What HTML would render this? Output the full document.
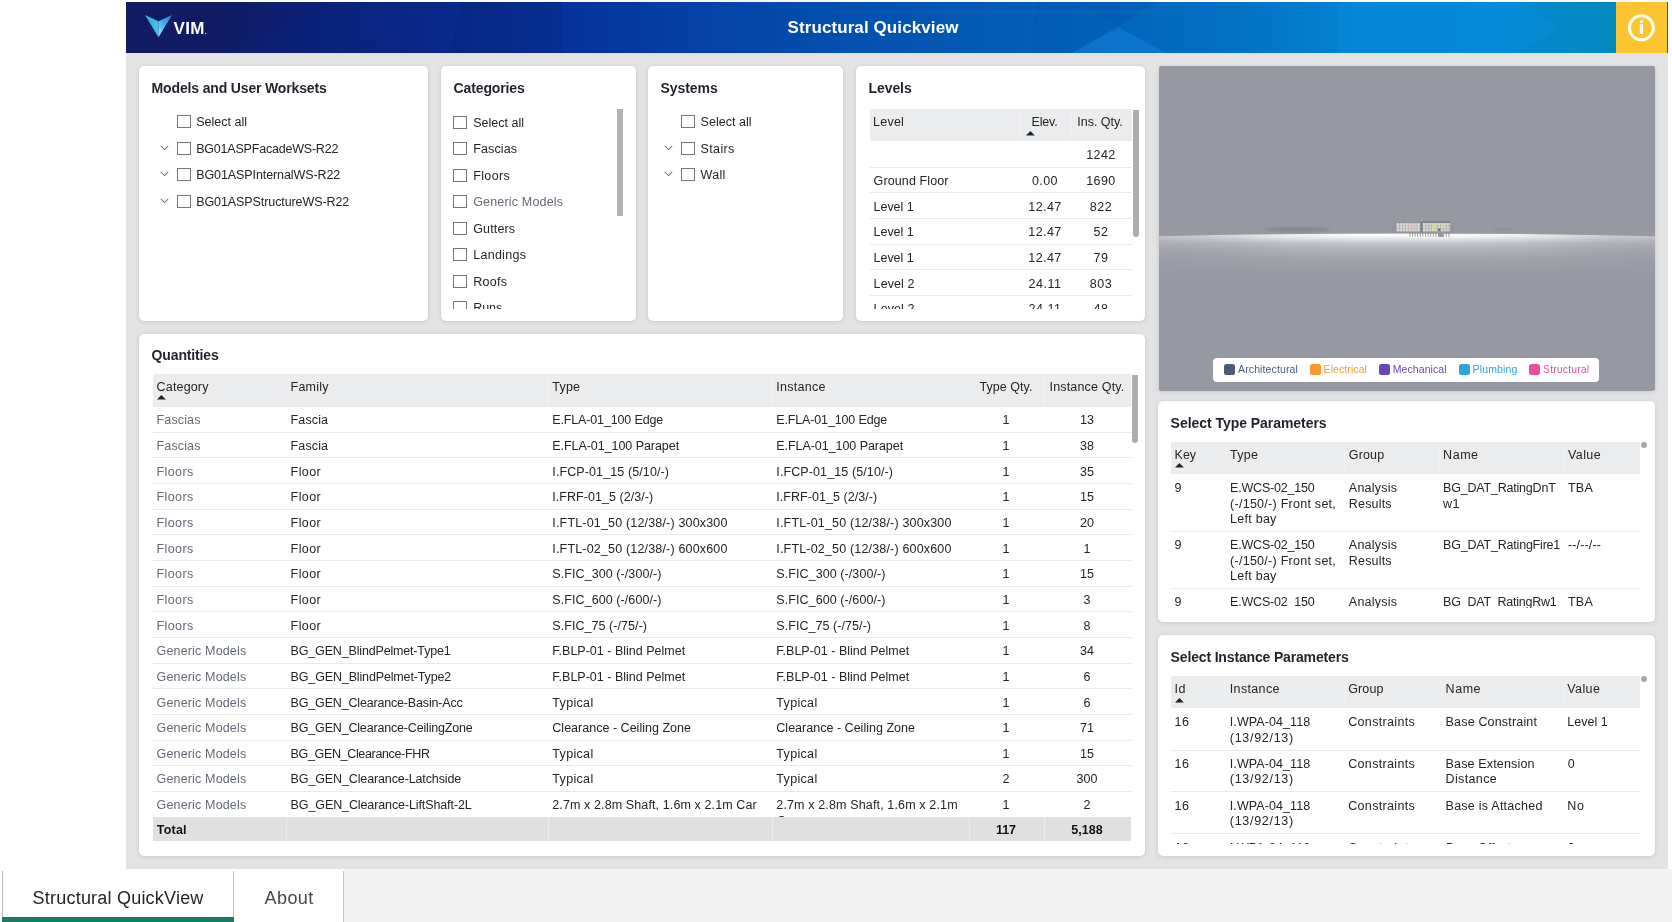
<!DOCTYPE html>
<html>
<head>
<meta charset="utf-8">
<title>Structural Quickview</title>
<style>
*{box-sizing:border-box;margin:0;padding:0}
html,body{width:1672px;height:922px;overflow:hidden;background:#fff;font-family:"Liberation Sans",sans-serif;font-size:12.5px;color:#252423}
.t{position:absolute;white-space:nowrap}
.card{background:#fff;border-radius:5px;box-shadow:0 1px 5px rgba(0,0,0,.11),0 0 2px rgba(0,0,0,.06)}
.clip{overflow:hidden}
</style>
</head>
<body>
<div id="root" style="position:absolute;left:0;top:0;width:1672px;height:922px;overflow:hidden;will-change:transform">
<div style="position:absolute;left:126.00px;top:53.00px;width:1542.00px;height:816.00px;background:#e3e3e5"></div>
<div class="" style="position:absolute;left:126.00px;top:2.00px;width:1542.00px;height:51.00px;overflow:hidden;background:linear-gradient(90deg,#101b62 0%,#0f1c66 6.1%,#0b2278 13.7%,#09278a 20.2%,#06329b 28.5%,#0440a5 36.5%,#034aab 42.4%,#0258b2 53.4%,#0262ba 61.9%,#0270c4 71.6%,#0282d0 78.7%,#0288d6 89.1%,#0289c8 93%,#0289c0 96.6%,#0289c0 100%)">
<svg style="position:absolute;left:0;top:0" width="1542" height="51" viewBox="126 2 1542 51">
<defs><linearGradient id="vl" x1="0" y1="0" x2="1" y2="1"><stop offset="0" stop-color="#3aa6e0"/><stop offset="1" stop-color="#49c6ea"/></linearGradient>
<linearGradient id="vr" x1="1" y1="0" x2="0.2" y2="1"><stop offset="0" stop-color="#2a80cc"/><stop offset=".5" stop-color="#3fa8e2"/><stop offset="1" stop-color="#8fe6f4"/></linearGradient></defs>
<polygon points="462,2 562,2 562,53 450,53" fill="#002060" opacity=".16"/>
<polygon points="230,53 330,2 440,2 340,53" fill="#1030a0" opacity=".10"/>
<polygon points="1072,53 1118,27 1166,53" fill="#1e90ea" opacity=".34"/>
<polygon points="1080,2 1118,27 1156,2" fill="#003c96" opacity=".14"/>
<polygon points="1036,2 1080,2 1118,27 1072,53 1030,53" fill="#003c96" opacity=".07"/>
<polygon points="1338,2 1520,2 1560,27 1520,53 1338,53" fill="#18a0f4" opacity=".13"/>
<polygon points="145,15 158.5,21.3 158.5,37.2" fill="url(#vl)"/>
<polygon points="172,15 158.5,21.3 158.5,37.2" fill="url(#vr)"/>
<rect x="1616" y="2" width="51" height="51" fill="#fdc432"/>
<rect x="1667" y="2" width="1" height="51" fill="#2f6a4a"/>
<circle cx="1641.4" cy="27.8" r="12" fill="none" stroke="#fffdf2" stroke-width="3"/>
<rect x="1639.8" y="24.2" width="3.3" height="9.8" fill="#fffdf2"/>
<rect x="1639.8" y="20.4" width="3.3" height="2.6" fill="#fffdf2"/>
</svg>
<div class="t" style="top:16.61px;font-size:17px;line-height:19px;font-weight:700;color:#fff;letter-spacing:0.255px;left:47.60px;">VIM</div>
<div style="position:absolute;left:79.00px;top:31.00px;width:1.20px;height:1.20px;background:#cfd6ee"></div>
<div class="t" style="top:16.11px;font-size:17px;line-height:19px;font-weight:700;color:#fff;letter-spacing:0.094px;left:661.50px;">Structural Quickview</div>
</div>
<div class="card" style="position:absolute;left:139.00px;top:66.00px;width:289.00px;height:255.00px;">
<div class="t" style="top:14.15px;font-size:14px;line-height:16px;font-weight:700;color:#1f232b;letter-spacing:-0.154px;left:12.60px;">Models and User Worksets</div>
<div style="position:absolute;left:38.00px;top:49.00px;width:13.60px;height:13.00px;border:1px solid #757575;background:#fff"></div>
<div class="t" style="top:48.67px;font-size:12.5px;line-height:14px;letter-spacing:0.027px;left:57.20px;">Select all</div>
<div style="position:absolute;left:38.00px;top:76.00px;width:13.60px;height:13.00px;border:1px solid #757575;background:#fff"></div>
<div class="t" style="top:75.67px;font-size:12.5px;line-height:14px;letter-spacing:-0.206px;left:57.20px;">BG01ASPFacadeWS-R22</div>
<svg style="position:absolute;left:21.30px;top:79.00px" width="9" height="6" viewBox="0 0 9 6"><path d="M0.8 0.8 L4.5 4.6 L8.2 0.8" fill="none" stroke="#787878" stroke-width="1.05"/></svg>
<div style="position:absolute;left:38.00px;top:102.00px;width:13.60px;height:13.00px;border:1px solid #757575;background:#fff"></div>
<div class="t" style="top:101.67px;font-size:12.5px;line-height:14px;letter-spacing:-0.091px;left:57.20px;">BG01ASPInternalWS-R22</div>
<svg style="position:absolute;left:21.30px;top:105.00px" width="9" height="6" viewBox="0 0 9 6"><path d="M0.8 0.8 L4.5 4.6 L8.2 0.8" fill="none" stroke="#787878" stroke-width="1.05"/></svg>
<div style="position:absolute;left:38.00px;top:129.00px;width:13.60px;height:13.00px;border:1px solid #757575;background:#fff"></div>
<div class="t" style="top:128.67px;font-size:12.5px;line-height:14px;letter-spacing:-0.087px;left:57.20px;">BG01ASPStructureWS-R22</div>
<svg style="position:absolute;left:21.30px;top:132.00px" width="9" height="6" viewBox="0 0 9 6"><path d="M0.8 0.8 L4.5 4.6 L8.2 0.8" fill="none" stroke="#787878" stroke-width="1.05"/></svg>
</div>
<div class="card" style="position:absolute;left:441.00px;top:66.00px;width:195.00px;height:255.00px;">
<div class="t" style="top:14.15px;font-size:14px;line-height:16px;font-weight:700;color:#1f232b;letter-spacing:-0.136px;left:12.60px;">Categories</div>
<div class="clip" style="position:absolute;left:0.00px;top:34.00px;width:195.00px;height:208.50px;">
<div style="position:absolute;left:12.00px;top:16.00px;width:13.60px;height:13.00px;border:1px solid #757575;background:#fff"></div>
<div class="t" style="top:15.67px;font-size:12.5px;line-height:14px;letter-spacing:0.027px;left:32.20px;">Select all</div>
<div style="position:absolute;left:12.00px;top:42.00px;width:13.60px;height:13.00px;border:1px solid #757575;background:#fff"></div>
<div class="t" style="top:41.67px;font-size:12.5px;line-height:14px;letter-spacing:0.132px;left:32.20px;">Fascias</div>
<div style="position:absolute;left:12.00px;top:69.00px;width:13.60px;height:13.00px;border:1px solid #757575;background:#fff"></div>
<div class="t" style="top:68.67px;font-size:12.5px;line-height:14px;letter-spacing:0.378px;left:32.20px;">Floors</div>
<div style="position:absolute;left:12.00px;top:95.00px;width:13.60px;height:13.00px;border:1px solid #757575;background:#fff"></div>
<div class="t" style="top:94.67px;font-size:12.5px;line-height:14px;color:#636a75;letter-spacing:0.175px;left:32.20px;">Generic Models</div>
<div style="position:absolute;left:12.00px;top:122.00px;width:13.60px;height:13.00px;border:1px solid #757575;background:#fff"></div>
<div class="t" style="top:121.67px;font-size:12.5px;line-height:14px;letter-spacing:0.143px;left:32.20px;">Gutters</div>
<div style="position:absolute;left:12.00px;top:148.00px;width:13.60px;height:13.00px;border:1px solid #757575;background:#fff"></div>
<div class="t" style="top:147.67px;font-size:12.5px;line-height:14px;letter-spacing:0.281px;left:32.20px;">Landings</div>
<div style="position:absolute;left:12.00px;top:175.00px;width:13.60px;height:13.00px;border:1px solid #757575;background:#fff"></div>
<div class="t" style="top:174.67px;font-size:12.5px;line-height:14px;letter-spacing:0.269px;left:32.20px;">Roofs</div>
<div style="position:absolute;left:12.00px;top:201.00px;width:13.60px;height:13.00px;border:1px solid #757575;background:#fff"></div>
<div class="t" style="top:200.67px;font-size:12.5px;line-height:14px;letter-spacing:-0.047px;left:32.20px;">Runs</div>
</div>
<div style="position:absolute;left:176.00px;top:43.00px;width:6.00px;height:106.50px;background:#b3b3b3"></div>
</div>
<div class="card" style="position:absolute;left:648.00px;top:66.00px;width:195.00px;height:255.00px;">
<div class="t" style="top:14.15px;font-size:14px;line-height:16px;font-weight:700;color:#1f232b;letter-spacing:-0.085px;left:12.60px;">Systems</div>
<div style="position:absolute;left:33.00px;top:49.00px;width:13.60px;height:13.00px;border:1px solid #757575;background:#fff"></div>
<div class="t" style="top:48.67px;font-size:12.5px;line-height:14px;letter-spacing:0.027px;left:52.60px;">Select all</div>
<div style="position:absolute;left:33.00px;top:76.00px;width:13.60px;height:13.00px;border:1px solid #757575;background:#fff"></div>
<div class="t" style="top:75.67px;font-size:12.5px;line-height:14px;letter-spacing:0.341px;left:52.60px;">Stairs</div>
<svg style="position:absolute;left:16.30px;top:79.00px" width="9" height="6" viewBox="0 0 9 6"><path d="M0.8 0.8 L4.5 4.6 L8.2 0.8" fill="none" stroke="#787878" stroke-width="1.05"/></svg>
<div style="position:absolute;left:33.00px;top:102.00px;width:13.60px;height:13.00px;border:1px solid #757575;background:#fff"></div>
<div class="t" style="top:101.67px;font-size:12.5px;line-height:14px;letter-spacing:0.289px;left:52.60px;">Wall</div>
<svg style="position:absolute;left:16.30px;top:105.00px" width="9" height="6" viewBox="0 0 9 6"><path d="M0.8 0.8 L4.5 4.6 L8.2 0.8" fill="none" stroke="#787878" stroke-width="1.05"/></svg>
</div>
<div class="card" style="position:absolute;left:856.00px;top:66.00px;width:289.00px;height:255.00px;">
<div class="t" style="top:14.15px;font-size:14px;line-height:16px;font-weight:700;color:#1f232b;letter-spacing:-0.099px;left:12.60px;">Levels</div>
<div style="position:absolute;left:14.00px;top:43.40px;width:262.00px;height:32.00px;background:#ebecee"></div>
<div class="t" style="top:48.67px;font-size:12.5px;line-height:14px;letter-spacing:0.222px;left:17.10px;">Level</div>
<div class="t" style="top:48.67px;font-size:12.5px;line-height:14px;letter-spacing:-0.175px;left:175.50px;">Elev.</div>
<div class="t" style="top:48.67px;font-size:12.5px;line-height:14px;letter-spacing:-0.014px;left:221.25px;">Ins. Qty.</div>
<svg style="position:absolute;left:169.60px;top:64.60px" width="9" height="5" viewBox="0 0 9 5"><path d="M0 4.6 L4.4 0 L8.8 4.6 Z" fill="#1f232b"/></svg>
<div style="position:absolute;left:164.00px;top:43.40px;width:1.00px;height:32.00px;background:rgba(255,255,255,.24)"></div>
<div style="position:absolute;left:215.00px;top:43.40px;width:1.00px;height:32.00px;background:rgba(255,255,255,.24)"></div>
<div style="position:absolute;left:277.00px;top:43.50px;width:5.60px;height:127.50px;background:#adadad;border-radius:0 0 3px 3px"></div>
<div class="clip" style="position:absolute;left:14.00px;top:75.40px;width:262.00px;height:167.20px;">
<div class="t" style="top:6.77px;font-size:12.5px;line-height:14px;letter-spacing:0.422px;left:216.25px;">1242</div>
<div style="position:absolute;left:0.00px;top:25.60px;width:262.00px;height:1.00px;background:#e8e8e8"></div>
<div class="t" style="top:32.47px;font-size:12.5px;line-height:14px;letter-spacing:0.112px;left:3.60px;">Ground Floor</div>
<div class="t" style="top:32.47px;font-size:12.5px;line-height:14px;letter-spacing:0.414px;left:162.00px;">0.00</div>
<div class="t" style="top:32.47px;font-size:12.5px;line-height:14px;letter-spacing:0.422px;left:216.25px;">1690</div>
<div style="position:absolute;left:0.00px;top:50.60px;width:262.00px;height:1.00px;background:#e8e8e8"></div>
<div class="t" style="top:58.17px;font-size:12.5px;line-height:14px;letter-spacing:-0.045px;left:3.60px;">Level 1</div>
<div class="t" style="top:58.17px;font-size:12.5px;line-height:14px;letter-spacing:0.444px;left:158.25px;">12.47</div>
<div class="t" style="top:58.17px;font-size:12.5px;line-height:14px;letter-spacing:0.547px;left:219.75px;">822</div>
<div style="position:absolute;left:0.00px;top:76.60px;width:262.00px;height:1.00px;background:#e8e8e8"></div>
<div class="t" style="top:83.87px;font-size:12.5px;line-height:14px;letter-spacing:-0.045px;left:3.60px;">Level 1</div>
<div class="t" style="top:83.87px;font-size:12.5px;line-height:14px;letter-spacing:0.444px;left:158.25px;">12.47</div>
<div class="t" style="top:83.87px;font-size:12.5px;line-height:14px;letter-spacing:0.547px;left:223.50px;">52</div>
<div style="position:absolute;left:0.00px;top:102.60px;width:262.00px;height:1.00px;background:#e8e8e8"></div>
<div class="t" style="top:109.57px;font-size:12.5px;line-height:14px;letter-spacing:-0.045px;left:3.60px;">Level 1</div>
<div class="t" style="top:109.57px;font-size:12.5px;line-height:14px;letter-spacing:0.444px;left:158.25px;">12.47</div>
<div class="t" style="top:109.57px;font-size:12.5px;line-height:14px;letter-spacing:0.547px;left:223.50px;">79</div>
<div style="position:absolute;left:0.00px;top:127.60px;width:262.00px;height:1.00px;background:#e8e8e8"></div>
<div class="t" style="top:135.27px;font-size:12.5px;line-height:14px;letter-spacing:0.098px;left:3.60px;">Level 2</div>
<div class="t" style="top:135.27px;font-size:12.5px;line-height:14px;letter-spacing:0.528px;left:158.50px;">24.11</div>
<div class="t" style="top:135.27px;font-size:12.5px;line-height:14px;letter-spacing:0.547px;left:219.75px;">803</div>
<div style="position:absolute;left:0.00px;top:153.60px;width:262.00px;height:1.00px;background:#e8e8e8"></div>
<div class="t" style="top:160.97px;font-size:12.5px;line-height:14px;letter-spacing:0.098px;left:3.60px;">Level 2</div>
<div class="t" style="top:160.97px;font-size:12.5px;line-height:14px;letter-spacing:0.528px;left:158.50px;">24.11</div>
<div class="t" style="top:160.97px;font-size:12.5px;line-height:14px;letter-spacing:0.547px;left:223.50px;">48</div>
<div style="position:absolute;left:0.00px;top:179.60px;width:262.00px;height:1.00px;background:#e8e8e8"></div>
</div>
</div>
<div class="card" style="position:absolute;left:1159.00px;top:66.00px;width:496.00px;height:325.00px;background:#9699a2;overflow:hidden;border-radius:3px">
<svg style="position:absolute;left:0;top:0" width="496" height="325" viewBox="1159 66 496 325">
<defs>
<linearGradient id="hz" gradientUnits="userSpaceOnUse" x1="0" y1="233.3" x2="0" y2="283.3">
<stop offset="0" stop-color="#fff" stop-opacity=".85"/><stop offset=".03" stop-color="#fff" stop-opacity=".97"/>
<stop offset=".08" stop-color="#fff" stop-opacity=".86"/><stop offset=".14" stop-color="#fff" stop-opacity=".62"/>
<stop offset=".20" stop-color="#fff" stop-opacity=".44"/><stop offset=".28" stop-color="#fff" stop-opacity=".31"/>
<stop offset=".40" stop-color="#fff" stop-opacity=".19"/><stop offset=".56" stop-color="#fff" stop-opacity=".10"/>
<stop offset=".76" stop-color="#fff" stop-opacity=".04"/><stop offset="1" stop-color="#fff" stop-opacity="0"/></linearGradient>
<linearGradient id="hm" x1="0" y1="0" x2="1" y2="0">
<stop offset="0" stop-color="#fff" stop-opacity=".46"/><stop offset=".12" stop-color="#fff" stop-opacity=".60"/>
<stop offset=".27" stop-color="#fff" stop-opacity=".90"/><stop offset=".40" stop-color="#fff" stop-opacity="1"/>
<stop offset=".60" stop-color="#fff" stop-opacity="1"/><stop offset=".73" stop-color="#fff" stop-opacity=".90"/>
<stop offset=".88" stop-color="#fff" stop-opacity=".60"/><stop offset="1" stop-color="#fff" stop-opacity=".46"/></linearGradient>
<mask id="mk" maskUnits="userSpaceOnUse" x="1158" y="66" width="497" height="325"><rect x="1158" y="66" width="497" height="325" fill="url(#hm)"/></mask>
<filter id="bl" x="-20%" y="-200%" width="140%" height="500%"><feGaussianBlur stdDeviation="1.2"/></filter>
<filter id="b2" x="-20%" y="-50%" width="140%" height="200%"><feGaussianBlur stdDeviation="0.45"/></filter>
</defs>
<rect x="1158" y="66" width="497" height="325" fill="#9699a2"/>
<ellipse cx="1297" cy="229.3" rx="33" ry="2.6" fill="#82858e" opacity=".85" filter="url(#bl)"/>
<ellipse cx="1503" cy="229.5" rx="10" ry="1.6" fill="#878a93" opacity=".6" filter="url(#bl)"/>
<g mask="url(#mk)"><path d="M1158 236.2 Q1406.5 230.6 1655 236.2 L1655 300 L1158 300 Z" fill="url(#hz)"/></g>
<g filter="url(#b2)"><rect x="1392" y="226" width="62" height="6.5" fill="#8d9099" opacity=".55"/><rect x="1396.7" y="223" width="23.1" height="8.3" fill="#dedcd8"/><rect x="1423" y="223" width="27.2" height="8.3" fill="#d9d9d2"/><rect x="1399.3" y="223" width="0.7" height="8.3" fill="#9a9a9c" opacity=".8"/><rect x="1402.2" y="223" width="0.7" height="8.3" fill="#9a9a9c" opacity=".8"/><rect x="1405.1" y="223" width="0.7" height="8.3" fill="#9a9a9c" opacity=".8"/><rect x="1408.0" y="223" width="0.7" height="8.3" fill="#9a9a9c" opacity=".8"/><rect x="1410.9" y="223" width="0.7" height="8.3" fill="#9a9a9c" opacity=".8"/><rect x="1413.8" y="223" width="0.7" height="8.3" fill="#9a9a9c" opacity=".8"/><rect x="1416.7" y="223" width="0.7" height="8.3" fill="#9a9a9c" opacity=".8"/><rect x="1425.6" y="223" width="0.7" height="8.3" fill="#9a9a9c" opacity=".8"/><rect x="1428.5" y="223" width="0.7" height="8.3" fill="#9a9a9c" opacity=".8"/><rect x="1431.4" y="223" width="0.7" height="8.3" fill="#9a9a9c" opacity=".8"/><rect x="1434.3" y="223" width="0.7" height="8.3" fill="#9a9a9c" opacity=".8"/><rect x="1437.2" y="223" width="0.7" height="8.3" fill="#9a9a9c" opacity=".8"/><rect x="1440.1" y="223" width="0.7" height="8.3" fill="#9a9a9c" opacity=".8"/><rect x="1443.0" y="223" width="0.7" height="8.3" fill="#9a9a9c" opacity=".8"/><rect x="1445.9" y="223" width="0.7" height="8.3" fill="#9a9a9c" opacity=".8"/><rect x="1448.8" y="223" width="0.7" height="8.3" fill="#9a9a9c" opacity=".8"/><rect x="1396.7" y="225.6" width="23.1" height="0.7" fill="#a9a5a5" opacity=".8"/><rect x="1423" y="225.6" width="27.2" height="0.7" fill="#a3a59d" opacity=".8"/><rect x="1396.7" y="228.4" width="23.1" height="0.7" fill="#a9a5a5" opacity=".8"/><rect x="1423" y="228.4" width="27.2" height="0.7" fill="#a3a59d" opacity=".8"/><rect x="1407" y="224" width="11" height="6" fill="#e6c9c9" opacity=".35"/><rect x="1432" y="223.6" width="3.4" height="7.4" fill="#d6dc94" opacity=".75"/><rect x="1442" y="223.6" width="2.3" height="5" fill="#d3d994" opacity=".75"/><rect x="1438" y="228.6" width="2.4" height="2.6" fill="#6d6f72"/><rect x="1420.4" y="221.6" width="30.2" height="1.1" fill="#74777c"/><rect x="1396" y="222.4" width="24" height="0.7" fill="#8a8c92"/><rect x="1420.6" y="221" width="1.6" height="11.5" fill="#7c7f86"/><rect x="1421" y="219.6" width="1" height="1.2" fill="#c9cad0"/><rect x="1409.5" y="232.6" width="0.8" height="4.2" fill="#7d7f85" opacity=".9"/><rect x="1412.1" y="232.6" width="0.8" height="4.2" fill="#7d7f85" opacity=".9"/><rect x="1414.7" y="232.6" width="0.8" height="4.2" fill="#7d7f85" opacity=".9"/><rect x="1417.3" y="232.6" width="0.8" height="4.2" fill="#7d7f85" opacity=".9"/><rect x="1419.9" y="232.6" width="0.8" height="4.2" fill="#7d7f85" opacity=".9"/><rect x="1422.5" y="232.6" width="0.8" height="4.2" fill="#7d7f85" opacity=".9"/><rect x="1425.1" y="232.6" width="0.8" height="4.2" fill="#7d7f85" opacity=".9"/><rect x="1427.7" y="232.6" width="0.8" height="4.2" fill="#7d7f85" opacity=".9"/><rect x="1430.3" y="232.6" width="0.8" height="4.2" fill="#7d7f85" opacity=".9"/><rect x="1432.9" y="232.6" width="0.8" height="4.2" fill="#7d7f85" opacity=".9"/><rect x="1435.5" y="232.6" width="0.8" height="4.2" fill="#7d7f85" opacity=".9"/><rect x="1438.1" y="232.6" width="0.8" height="4.2" fill="#7d7f85" opacity=".9"/><rect x="1440.7" y="232.6" width="0.8" height="4.2" fill="#7d7f85" opacity=".9"/><rect x="1443.3" y="232.6" width="0.8" height="4.2" fill="#7d7f85" opacity=".9"/><rect x="1445.9" y="232.6" width="0.8" height="4.2" fill="#7d7f85" opacity=".9"/><rect x="1448.5" y="232.6" width="0.8" height="4.2" fill="#7d7f85" opacity=".9"/><rect x="1439" y="233.4" width="4" height="3.5" fill="#8b8d93" opacity=".9"/></g>
</svg>
<div style="position:absolute;left:54.00px;top:291.50px;width:385.50px;height:24.00px;background:#fff;border-radius:4px"></div>
<div style="position:absolute;left:65.00px;top:297.50px;width:11.00px;height:11.00px;background:#4a5a78;border-radius:2.5px"></div>
<div class="t" style="top:296.96px;font-size:10.5px;line-height:12px;color:#4a5a78;letter-spacing:0.126px;left:79.00px;">Architectural</div>
<div style="position:absolute;left:150.50px;top:297.50px;width:11.00px;height:11.00px;background:#f89a2a;border-radius:2.5px"></div>
<div class="t" style="top:296.96px;font-size:10.5px;line-height:12px;color:#f89a2a;letter-spacing:0.079px;left:164.60px;">Electrical</div>
<div style="position:absolute;left:219.50px;top:297.50px;width:11.00px;height:11.00px;background:#6b45b5;border-radius:2.5px"></div>
<div class="t" style="top:296.96px;font-size:10.5px;line-height:12px;color:#6b45b5;letter-spacing:0.067px;left:233.80px;">Mechanical</div>
<div style="position:absolute;left:299.50px;top:297.50px;width:11.00px;height:11.00px;background:#2ea3dc;border-radius:2.5px"></div>
<div class="t" style="top:296.96px;font-size:10.5px;line-height:12px;color:#2ea3dc;letter-spacing:0.127px;left:313.60px;">Plumbing</div>
<div style="position:absolute;left:370.00px;top:297.50px;width:11.00px;height:11.00px;background:#e94fa0;border-radius:2.5px"></div>
<div class="t" style="top:296.96px;font-size:10.5px;line-height:12px;color:#e94fa0;letter-spacing:0.136px;left:384.00px;">Structural</div>
</div>
<div class="card" style="position:absolute;left:139.00px;top:334.00px;width:1006.00px;height:522.00px;">
<div class="t" style="top:13.15px;font-size:14px;line-height:16px;font-weight:700;color:#1f232b;letter-spacing:-0.147px;left:12.60px;">Quantities</div>
<div style="position:absolute;left:14.00px;top:40.00px;width:978.00px;height:32.60px;background:#ebecee"></div>
<div class="t" style="top:45.87px;font-size:12.5px;line-height:14px;letter-spacing:0.158px;left:17.60px;">Category</div>
<div class="t" style="top:45.87px;font-size:12.5px;line-height:14px;letter-spacing:0.198px;left:151.60px;">Family</div>
<div class="t" style="top:45.87px;font-size:12.5px;line-height:14px;letter-spacing:0.223px;left:413.30px;">Type</div>
<div class="t" style="top:45.87px;font-size:12.5px;line-height:14px;letter-spacing:0.279px;left:637.30px;">Instance</div>
<div class="t" style="top:45.87px;font-size:12.5px;line-height:14px;letter-spacing:0.047px;left:840.50px;">Type Qty.</div>
<div class="t" style="top:45.87px;font-size:12.5px;line-height:14px;letter-spacing:0.175px;left:910.50px;">Instance Qty.</div>
<svg style="position:absolute;left:17.60px;top:61.40px" width="9" height="5" viewBox="0 0 9 5"><path d="M0 4.6 L4.4 0 L8.8 4.6 Z" fill="#1f232b"/></svg>
<div style="position:absolute;left:147.00px;top:40.00px;width:1.00px;height:32.60px;background:rgba(255,255,255,.24)"></div>
<div style="position:absolute;left:408.50px;top:40.00px;width:1.00px;height:32.60px;background:rgba(255,255,255,.24)"></div>
<div style="position:absolute;left:632.50px;top:40.00px;width:1.00px;height:32.60px;background:rgba(255,255,255,.24)"></div>
<div style="position:absolute;left:829.50px;top:40.00px;width:1.00px;height:32.60px;background:rgba(255,255,255,.24)"></div>
<div style="position:absolute;left:904.50px;top:40.00px;width:1.00px;height:32.60px;background:rgba(255,255,255,.24)"></div>
<div style="position:absolute;left:993.00px;top:41.00px;width:5.60px;height:68.00px;background:#adadad;border-radius:0 0 3px 3px"></div>
<div class="clip" style="position:absolute;left:14.00px;top:72.60px;width:978.00px;height:410.40px;">
<div class="t" style="top:6.77px;font-size:12.5px;line-height:14px;color:#636a75;letter-spacing:0.132px;left:3.60px;">Fascias</div>
<div class="t" style="top:6.77px;font-size:12.5px;line-height:14px;letter-spacing:0.112px;left:137.60px;">Fascia</div>
<div class="t" style="top:6.77px;font-size:12.5px;line-height:14px;letter-spacing:-0.146px;left:399.30px;">E.FLA-01_100 Edge</div>
<div class="t" style="top:6.77px;font-size:12.5px;line-height:14px;letter-spacing:-0.146px;left:623.30px;">E.FLA-01_100 Edge</div>
<div class="t" style="top:6.77px;font-size:12.5px;line-height:14px;left:849.52px;">1</div>
<div class="t" style="top:6.77px;font-size:12.5px;line-height:14px;left:927.05px;">13</div>
<div style="position:absolute;left:0.00px;top:25.40px;width:978.00px;height:1.00px;background:#e8e8e8"></div>
<div class="t" style="top:32.42px;font-size:12.5px;line-height:14px;color:#636a75;letter-spacing:0.132px;left:3.60px;">Fascias</div>
<div class="t" style="top:32.42px;font-size:12.5px;line-height:14px;letter-spacing:0.112px;left:137.60px;">Fascia</div>
<div class="t" style="top:32.42px;font-size:12.5px;line-height:14px;letter-spacing:-0.054px;left:399.30px;">E.FLA-01_100 Parapet</div>
<div class="t" style="top:32.42px;font-size:12.5px;line-height:14px;letter-spacing:-0.054px;left:623.30px;">E.FLA-01_100 Parapet</div>
<div class="t" style="top:32.42px;font-size:12.5px;line-height:14px;left:849.52px;">1</div>
<div class="t" style="top:32.42px;font-size:12.5px;line-height:14px;left:927.05px;">38</div>
<div style="position:absolute;left:0.00px;top:50.40px;width:978.00px;height:1.00px;background:#e8e8e8"></div>
<div class="t" style="top:58.07px;font-size:12.5px;line-height:14px;color:#636a75;letter-spacing:0.378px;left:3.60px;">Floors</div>
<div class="t" style="top:58.07px;font-size:12.5px;line-height:14px;letter-spacing:0.403px;left:137.60px;">Floor</div>
<div class="t" style="top:58.07px;font-size:12.5px;line-height:14px;letter-spacing:0.108px;left:399.30px;">I.FCP-01_15 (5/10/-)</div>
<div class="t" style="top:58.07px;font-size:12.5px;line-height:14px;letter-spacing:0.108px;left:623.30px;">I.FCP-01_15 (5/10/-)</div>
<div class="t" style="top:58.07px;font-size:12.5px;line-height:14px;left:849.52px;">1</div>
<div class="t" style="top:58.07px;font-size:12.5px;line-height:14px;left:927.05px;">35</div>
<div style="position:absolute;left:0.00px;top:76.40px;width:978.00px;height:1.00px;background:#e8e8e8"></div>
<div class="t" style="top:83.72px;font-size:12.5px;line-height:14px;color:#636a75;letter-spacing:0.378px;left:3.60px;">Floors</div>
<div class="t" style="top:83.72px;font-size:12.5px;line-height:14px;letter-spacing:0.403px;left:137.60px;">Floor</div>
<div class="t" style="top:83.72px;font-size:12.5px;line-height:14px;letter-spacing:0.054px;left:399.30px;">I.FRF-01_5 (2/3/-)</div>
<div class="t" style="top:83.72px;font-size:12.5px;line-height:14px;letter-spacing:0.054px;left:623.30px;">I.FRF-01_5 (2/3/-)</div>
<div class="t" style="top:83.72px;font-size:12.5px;line-height:14px;left:849.52px;">1</div>
<div class="t" style="top:83.72px;font-size:12.5px;line-height:14px;left:927.05px;">15</div>
<div style="position:absolute;left:0.00px;top:102.40px;width:978.00px;height:1.00px;background:#e8e8e8"></div>
<div class="t" style="top:109.37px;font-size:12.5px;line-height:14px;color:#636a75;letter-spacing:0.378px;left:3.60px;">Floors</div>
<div class="t" style="top:109.37px;font-size:12.5px;line-height:14px;letter-spacing:0.403px;left:137.60px;">Floor</div>
<div class="t" style="top:109.37px;font-size:12.5px;line-height:14px;letter-spacing:0.174px;left:399.30px;">I.FTL-01_50 (12/38/-) 300x300</div>
<div class="t" style="top:109.37px;font-size:12.5px;line-height:14px;letter-spacing:0.174px;left:623.30px;">I.FTL-01_50 (12/38/-) 300x300</div>
<div class="t" style="top:109.37px;font-size:12.5px;line-height:14px;left:849.52px;">1</div>
<div class="t" style="top:109.37px;font-size:12.5px;line-height:14px;left:927.05px;">20</div>
<div style="position:absolute;left:0.00px;top:127.40px;width:978.00px;height:1.00px;background:#e8e8e8"></div>
<div class="t" style="top:135.02px;font-size:12.5px;line-height:14px;color:#636a75;letter-spacing:0.378px;left:3.60px;">Floors</div>
<div class="t" style="top:135.02px;font-size:12.5px;line-height:14px;letter-spacing:0.403px;left:137.60px;">Floor</div>
<div class="t" style="top:135.02px;font-size:12.5px;line-height:14px;letter-spacing:0.174px;left:399.30px;">I.FTL-02_50 (12/38/-) 600x600</div>
<div class="t" style="top:135.02px;font-size:12.5px;line-height:14px;letter-spacing:0.174px;left:623.30px;">I.FTL-02_50 (12/38/-) 600x600</div>
<div class="t" style="top:135.02px;font-size:12.5px;line-height:14px;left:849.52px;">1</div>
<div class="t" style="top:135.02px;font-size:12.5px;line-height:14px;left:930.52px;">1</div>
<div style="position:absolute;left:0.00px;top:153.40px;width:978.00px;height:1.00px;background:#e8e8e8"></div>
<div class="t" style="top:160.67px;font-size:12.5px;line-height:14px;color:#636a75;letter-spacing:0.378px;left:3.60px;">Floors</div>
<div class="t" style="top:160.67px;font-size:12.5px;line-height:14px;letter-spacing:0.403px;left:137.60px;">Floor</div>
<div class="t" style="top:160.67px;font-size:12.5px;line-height:14px;letter-spacing:0.080px;left:399.30px;">S.FIC_300 (-/300/-)</div>
<div class="t" style="top:160.67px;font-size:12.5px;line-height:14px;letter-spacing:0.080px;left:623.30px;">S.FIC_300 (-/300/-)</div>
<div class="t" style="top:160.67px;font-size:12.5px;line-height:14px;left:849.52px;">1</div>
<div class="t" style="top:160.67px;font-size:12.5px;line-height:14px;left:927.05px;">15</div>
<div style="position:absolute;left:0.00px;top:179.40px;width:978.00px;height:1.00px;background:#e8e8e8"></div>
<div class="t" style="top:186.32px;font-size:12.5px;line-height:14px;color:#636a75;letter-spacing:0.378px;left:3.60px;">Floors</div>
<div class="t" style="top:186.32px;font-size:12.5px;line-height:14px;letter-spacing:0.403px;left:137.60px;">Floor</div>
<div class="t" style="top:186.32px;font-size:12.5px;line-height:14px;letter-spacing:0.080px;left:399.30px;">S.FIC_600 (-/600/-)</div>
<div class="t" style="top:186.32px;font-size:12.5px;line-height:14px;letter-spacing:0.080px;left:623.30px;">S.FIC_600 (-/600/-)</div>
<div class="t" style="top:186.32px;font-size:12.5px;line-height:14px;left:849.52px;">1</div>
<div class="t" style="top:186.32px;font-size:12.5px;line-height:14px;left:930.52px;">3</div>
<div style="position:absolute;left:0.00px;top:204.40px;width:978.00px;height:1.00px;background:#e8e8e8"></div>
<div class="t" style="top:211.97px;font-size:12.5px;line-height:14px;color:#636a75;letter-spacing:0.378px;left:3.60px;">Floors</div>
<div class="t" style="top:211.97px;font-size:12.5px;line-height:14px;letter-spacing:0.403px;left:137.60px;">Floor</div>
<div class="t" style="top:211.97px;font-size:12.5px;line-height:14px;letter-spacing:0.060px;left:399.30px;">S.FIC_75 (-/75/-)</div>
<div class="t" style="top:211.97px;font-size:12.5px;line-height:14px;letter-spacing:0.060px;left:623.30px;">S.FIC_75 (-/75/-)</div>
<div class="t" style="top:211.97px;font-size:12.5px;line-height:14px;left:849.52px;">1</div>
<div class="t" style="top:211.97px;font-size:12.5px;line-height:14px;left:930.52px;">8</div>
<div style="position:absolute;left:0.00px;top:230.40px;width:978.00px;height:1.00px;background:#e8e8e8"></div>
<div class="t" style="top:237.62px;font-size:12.5px;line-height:14px;color:#636a75;letter-spacing:0.154px;left:3.60px;">Generic Models</div>
<div class="t" style="top:237.62px;font-size:12.5px;line-height:14px;letter-spacing:-0.165px;left:137.60px;">BG_GEN_BlindPelmet-Type1</div>
<div class="t" style="top:237.62px;font-size:12.5px;line-height:14px;letter-spacing:0.009px;left:399.30px;">F.BLP-01 - Blind Pelmet</div>
<div class="t" style="top:237.62px;font-size:12.5px;line-height:14px;letter-spacing:0.009px;left:623.30px;">F.BLP-01 - Blind Pelmet</div>
<div class="t" style="top:237.62px;font-size:12.5px;line-height:14px;left:849.52px;">1</div>
<div class="t" style="top:237.62px;font-size:12.5px;line-height:14px;left:927.05px;">34</div>
<div style="position:absolute;left:0.00px;top:256.40px;width:978.00px;height:1.00px;background:#e8e8e8"></div>
<div class="t" style="top:263.27px;font-size:12.5px;line-height:14px;color:#636a75;letter-spacing:0.154px;left:3.60px;">Generic Models</div>
<div class="t" style="top:263.27px;font-size:12.5px;line-height:14px;letter-spacing:-0.145px;left:137.60px;">BG_GEN_BlindPelmet-Type2</div>
<div class="t" style="top:263.27px;font-size:12.5px;line-height:14px;letter-spacing:0.009px;left:399.30px;">F.BLP-01 - Blind Pelmet</div>
<div class="t" style="top:263.27px;font-size:12.5px;line-height:14px;letter-spacing:0.009px;left:623.30px;">F.BLP-01 - Blind Pelmet</div>
<div class="t" style="top:263.27px;font-size:12.5px;line-height:14px;left:849.52px;">1</div>
<div class="t" style="top:263.27px;font-size:12.5px;line-height:14px;left:930.52px;">6</div>
<div style="position:absolute;left:0.00px;top:281.40px;width:978.00px;height:1.00px;background:#e8e8e8"></div>
<div class="t" style="top:288.92px;font-size:12.5px;line-height:14px;color:#636a75;letter-spacing:0.154px;left:3.60px;">Generic Models</div>
<div class="t" style="top:288.92px;font-size:12.5px;line-height:14px;letter-spacing:-0.172px;left:137.60px;">BG_GEN_Clearance-Basin-Acc</div>
<div class="t" style="top:288.92px;font-size:12.5px;line-height:14px;letter-spacing:0.328px;left:399.30px;">Typical</div>
<div class="t" style="top:288.92px;font-size:12.5px;line-height:14px;letter-spacing:0.328px;left:623.30px;">Typical</div>
<div class="t" style="top:288.92px;font-size:12.5px;line-height:14px;left:849.52px;">1</div>
<div class="t" style="top:288.92px;font-size:12.5px;line-height:14px;left:930.52px;">6</div>
<div style="position:absolute;left:0.00px;top:307.40px;width:978.00px;height:1.00px;background:#e8e8e8"></div>
<div class="t" style="top:314.57px;font-size:12.5px;line-height:14px;color:#636a75;letter-spacing:0.154px;left:3.60px;">Generic Models</div>
<div class="t" style="top:314.57px;font-size:12.5px;line-height:14px;letter-spacing:-0.175px;left:137.60px;">BG_GEN_Clearance-CeilingZone</div>
<div class="t" style="top:314.57px;font-size:12.5px;line-height:14px;letter-spacing:0.018px;left:399.30px;">Clearance - Ceiling Zone</div>
<div class="t" style="top:314.57px;font-size:12.5px;line-height:14px;letter-spacing:0.018px;left:623.30px;">Clearance - Ceiling Zone</div>
<div class="t" style="top:314.57px;font-size:12.5px;line-height:14px;left:849.52px;">1</div>
<div class="t" style="top:314.57px;font-size:12.5px;line-height:14px;left:927.05px;">71</div>
<div style="position:absolute;left:0.00px;top:333.40px;width:978.00px;height:1.00px;background:#e8e8e8"></div>
<div class="t" style="top:340.22px;font-size:12.5px;line-height:14px;color:#636a75;letter-spacing:0.154px;left:3.60px;">Generic Models</div>
<div class="t" style="top:340.22px;font-size:12.5px;line-height:14px;letter-spacing:-0.345px;left:137.60px;">BG_GEN_Clearance-FHR</div>
<div class="t" style="top:340.22px;font-size:12.5px;line-height:14px;letter-spacing:0.328px;left:399.30px;">Typical</div>
<div class="t" style="top:340.22px;font-size:12.5px;line-height:14px;letter-spacing:0.328px;left:623.30px;">Typical</div>
<div class="t" style="top:340.22px;font-size:12.5px;line-height:14px;left:849.52px;">1</div>
<div class="t" style="top:340.22px;font-size:12.5px;line-height:14px;left:927.05px;">15</div>
<div style="position:absolute;left:0.00px;top:358.40px;width:978.00px;height:1.00px;background:#e8e8e8"></div>
<div class="t" style="top:365.87px;font-size:12.5px;line-height:14px;color:#636a75;letter-spacing:0.154px;left:3.60px;">Generic Models</div>
<div class="t" style="top:365.87px;font-size:12.5px;line-height:14px;letter-spacing:-0.123px;left:137.60px;">BG_GEN_Clearance-Latchside</div>
<div class="t" style="top:365.87px;font-size:12.5px;line-height:14px;letter-spacing:0.328px;left:399.30px;">Typical</div>
<div class="t" style="top:365.87px;font-size:12.5px;line-height:14px;letter-spacing:0.328px;left:623.30px;">Typical</div>
<div class="t" style="top:365.87px;font-size:12.5px;line-height:14px;left:849.52px;">2</div>
<div class="t" style="top:365.87px;font-size:12.5px;line-height:14px;left:923.57px;">300</div>
<div style="position:absolute;left:0.00px;top:384.40px;width:978.00px;height:1.00px;background:#e8e8e8"></div>
<div class="t" style="top:391.52px;font-size:12.5px;line-height:14px;color:#636a75;letter-spacing:0.154px;left:3.60px;">Generic Models</div>
<div class="t" style="top:391.52px;font-size:12.5px;line-height:14px;letter-spacing:-0.108px;left:137.60px;">BG_GEN_Clearance-LiftShaft-2L</div>
<div class="t" style="top:391.52px;font-size:12.5px;line-height:14px;letter-spacing:0.109px;left:399.30px;">2.7m x 2.8m Shaft, 1.6m x 2.1m Car</div>
<div class="t" style="top:391.52px;font-size:12.5px;line-height:14px;letter-spacing:0.141px;left:623.30px;">2.7m x 2.8m Shaft, 1.6m x 2.1m</div>
<div class="t" style="top:391.52px;font-size:12.5px;line-height:14px;left:849.52px;">1</div>
<div class="t" style="top:391.52px;font-size:12.5px;line-height:14px;left:930.52px;">2</div>
<div class="t" style="top:406.92px;font-size:12.5px;line-height:14px;left:623.70px;">Car</div>
</div>
<div style="position:absolute;left:14.00px;top:483.00px;width:978.00px;height:24.30px;background:#e0e0e2"></div>
<div style="position:absolute;left:147.00px;top:483.00px;width:1.00px;height:24.30px;background:rgba(255,255,255,.38)"></div>
<div style="position:absolute;left:408.50px;top:483.00px;width:1.00px;height:24.30px;background:rgba(255,255,255,.38)"></div>
<div style="position:absolute;left:632.50px;top:483.00px;width:1.00px;height:24.30px;background:rgba(255,255,255,.38)"></div>
<div style="position:absolute;left:829.50px;top:483.00px;width:1.00px;height:24.30px;background:rgba(255,255,255,.38)"></div>
<div style="position:absolute;left:904.50px;top:483.00px;width:1.00px;height:24.30px;background:rgba(255,255,255,.38)"></div>
<div class="t" style="top:489.27px;font-size:12.5px;line-height:14px;font-weight:700;color:#111;letter-spacing:0.212px;left:17.80px;">Total</div>
<div class="t" style="top:489.27px;font-size:12.5px;line-height:14px;font-weight:700;color:#111;left:856.91px;">117</div>
<div class="t" style="top:489.27px;font-size:12.5px;line-height:14px;font-weight:700;color:#111;left:932.36px;">5,188</div>
</div>
<div class="card" style="position:absolute;left:1158.00px;top:401.00px;width:497.00px;height:221.00px;">
<div class="t" style="top:14.15px;font-size:14px;line-height:16px;font-weight:700;color:#1f232b;letter-spacing:-0.043px;left:12.60px;">Select Type Parameters</div>
<div style="position:absolute;left:13.00px;top:40.80px;width:468.50px;height:32.20px;background:#ebecee"></div>
<div class="t" style="top:46.67px;font-size:12.5px;line-height:14px;letter-spacing:-0.016px;left:16.60px;">Key</div>
<div class="t" style="top:46.67px;font-size:12.5px;line-height:14px;letter-spacing:0.223px;left:72.10px;">Type</div>
<div class="t" style="top:46.67px;font-size:12.5px;line-height:14px;letter-spacing:0.150px;left:190.80px;">Group</div>
<div class="t" style="top:46.67px;font-size:12.5px;line-height:14px;letter-spacing:0.539px;left:285.10px;">Name</div>
<div class="t" style="top:46.67px;font-size:12.5px;line-height:14px;letter-spacing:0.391px;left:410.00px;">Value</div>
<svg style="position:absolute;left:17.00px;top:62.40px" width="9" height="5" viewBox="0 0 9 5"><path d="M0 4.6 L4.4 0 L8.8 4.6 Z" fill="#1f232b"/></svg>
<div style="position:absolute;left:67.50px;top:40.80px;width:1.00px;height:32.20px;background:rgba(255,255,255,.24)"></div>
<div style="position:absolute;left:186.00px;top:40.80px;width:1.00px;height:32.20px;background:rgba(255,255,255,.24)"></div>
<div style="position:absolute;left:280.50px;top:40.80px;width:1.00px;height:32.20px;background:rgba(255,255,255,.24)"></div>
<div style="position:absolute;left:405.00px;top:40.80px;width:1.00px;height:32.20px;background:rgba(255,255,255,.24)"></div>
<div style="position:absolute;left:483.00px;top:41.00px;width:6.00px;height:6.00px;background:#a6a6a6;border-radius:3px"></div>
<div class="clip" style="position:absolute;left:13.00px;top:73.00px;width:468.50px;height:133.60px;">
<div class="t" style="top:7.07px;font-size:12.5px;line-height:14px;letter-spacing:0.547px;left:3.60px;">9</div>
<div class="t" style="top:7.07px;font-size:12.5px;line-height:14px;letter-spacing:-0.197px;left:59.10px;">E.WCS-02_150</div>
<div class="t" style="top:23.47px;font-size:12.5px;line-height:14px;letter-spacing:0.263px;left:59.10px;">(-/150/-) Front set,</div>
<div class="t" style="top:37.87px;font-size:12.5px;line-height:14px;letter-spacing:0.252px;left:59.10px;">Left bay</div>
<div class="t" style="top:7.07px;font-size:12.5px;line-height:14px;letter-spacing:0.244px;left:177.80px;">Analysis</div>
<div class="t" style="top:23.47px;font-size:12.5px;line-height:14px;letter-spacing:0.188px;left:177.80px;">Results</div>
<div class="t" style="top:7.07px;font-size:12.5px;line-height:14px;letter-spacing:-0.206px;left:272.10px;">BG_DAT_RatingDnT</div>
<div class="t" style="top:23.47px;font-size:12.5px;line-height:14px;letter-spacing:0.258px;left:272.10px;">w1</div>
<div class="t" style="top:7.07px;font-size:12.5px;line-height:14px;letter-spacing:0.229px;left:397.00px;">TBA</div>
<div style="position:absolute;left:0.00px;top:57.00px;width:468.50px;height:1.00px;background:#e8e8e8"></div>
<div class="t" style="top:64.22px;font-size:12.5px;line-height:14px;letter-spacing:0.547px;left:3.60px;">9</div>
<div class="t" style="top:64.22px;font-size:12.5px;line-height:14px;letter-spacing:-0.197px;left:59.10px;">E.WCS-02_150</div>
<div class="t" style="top:79.62px;font-size:12.5px;line-height:14px;letter-spacing:0.263px;left:59.10px;">(-/150/-) Front set,</div>
<div class="t" style="top:95.02px;font-size:12.5px;line-height:14px;letter-spacing:0.252px;left:59.10px;">Left bay</div>
<div class="t" style="top:64.22px;font-size:12.5px;line-height:14px;letter-spacing:0.244px;left:177.80px;">Analysis</div>
<div class="t" style="top:79.62px;font-size:12.5px;line-height:14px;letter-spacing:0.188px;left:177.80px;">Results</div>
<div class="t" style="top:64.22px;font-size:12.5px;line-height:14px;letter-spacing:-0.203px;left:272.10px;">BG_DAT_RatingFire1</div>
<div class="t" style="top:64.22px;font-size:12.5px;line-height:14px;letter-spacing:0.135px;left:397.00px;">--/--/--</div>
<div style="position:absolute;left:0.00px;top:114.00px;width:468.50px;height:1.00px;background:#e8e8e8"></div>
<div class="t" style="top:121.37px;font-size:12.5px;line-height:14px;letter-spacing:0.547px;left:3.60px;">9</div>
<div class="t" style="top:121.37px;font-size:12.5px;line-height:14px;letter-spacing:-0.197px;left:59.10px;">E.WCS-02_150</div>
<div class="t" style="top:136.77px;font-size:12.5px;line-height:14px;letter-spacing:0.263px;left:59.10px;">(-/150/-) Front set,</div>
<div class="t" style="top:152.17px;font-size:12.5px;line-height:14px;letter-spacing:0.252px;left:59.10px;">Left bay</div>
<div class="t" style="top:121.37px;font-size:12.5px;line-height:14px;letter-spacing:0.244px;left:177.80px;">Analysis</div>
<div class="t" style="top:136.77px;font-size:12.5px;line-height:14px;letter-spacing:0.188px;left:177.80px;">Results</div>
<div class="t" style="top:121.37px;font-size:12.5px;line-height:14px;letter-spacing:-0.230px;left:272.10px;">BG_DAT_RatingRw1</div>
<div class="t" style="top:121.37px;font-size:12.5px;line-height:14px;letter-spacing:0.229px;left:397.00px;">TBA</div>
<div style="position:absolute;left:0.00px;top:171.00px;width:468.50px;height:1.00px;background:#e8e8e8"></div>
</div>
</div>
<div class="card" style="position:absolute;left:1158.00px;top:635.00px;width:497.00px;height:221.00px;">
<div class="t" style="top:14.15px;font-size:14px;line-height:16px;font-weight:700;color:#1f232b;letter-spacing:-0.158px;left:12.60px;">Select Instance Parameters</div>
<div style="position:absolute;left:13.00px;top:40.90px;width:468.50px;height:32.50px;background:#ebecee"></div>
<div class="t" style="top:46.67px;font-size:12.5px;line-height:14px;letter-spacing:0.531px;left:16.60px;">Id</div>
<div class="t" style="top:46.67px;font-size:12.5px;line-height:14px;letter-spacing:0.342px;left:71.80px;">Instance</div>
<div class="t" style="top:46.67px;font-size:12.5px;line-height:14px;letter-spacing:0.150px;left:190.20px;">Group</div>
<div class="t" style="top:46.67px;font-size:12.5px;line-height:14px;letter-spacing:0.539px;left:287.60px;">Name</div>
<div class="t" style="top:46.67px;font-size:12.5px;line-height:14px;letter-spacing:0.391px;left:409.30px;">Value</div>
<svg style="position:absolute;left:17.00px;top:62.50px" width="9" height="5" viewBox="0 0 9 5"><path d="M0 4.6 L4.4 0 L8.8 4.6 Z" fill="#1f232b"/></svg>
<div style="position:absolute;left:67.00px;top:40.90px;width:1.00px;height:32.50px;background:rgba(255,255,255,.24)"></div>
<div style="position:absolute;left:185.50px;top:40.90px;width:1.00px;height:32.50px;background:rgba(255,255,255,.24)"></div>
<div style="position:absolute;left:283.00px;top:40.90px;width:1.00px;height:32.50px;background:rgba(255,255,255,.24)"></div>
<div style="position:absolute;left:404.50px;top:40.90px;width:1.00px;height:32.50px;background:rgba(255,255,255,.24)"></div>
<div style="position:absolute;left:483.00px;top:41.00px;width:6.00px;height:6.00px;background:#a6a6a6;border-radius:3px"></div>
<div class="clip" style="position:absolute;left:13.00px;top:73.40px;width:468.50px;height:135.60px;">
<div class="t" style="top:6.87px;font-size:12.5px;line-height:14px;letter-spacing:0.547px;left:3.60px;">16</div>
<div class="t" style="top:6.87px;font-size:12.5px;line-height:14px;letter-spacing:0.089px;left:58.80px;">I.WPA-04_118</div>
<div class="t" style="top:22.17px;font-size:12.5px;line-height:14px;letter-spacing:0.702px;left:58.80px;">(13/92/13)</div>
<div class="t" style="top:6.87px;font-size:12.5px;line-height:14px;letter-spacing:0.342px;left:177.20px;">Constraints</div>
<div class="t" style="top:6.87px;font-size:12.5px;line-height:14px;letter-spacing:0.171px;left:274.60px;">Base Constraint</div>
<div class="t" style="top:6.87px;font-size:12.5px;line-height:14px;letter-spacing:0.027px;left:396.30px;">Level 1</div>
<div style="position:absolute;left:0.00px;top:41.60px;width:468.50px;height:1.00px;background:#e8e8e8"></div>
<div class="t" style="top:48.62px;font-size:12.5px;line-height:14px;letter-spacing:0.547px;left:3.60px;">16</div>
<div class="t" style="top:48.62px;font-size:12.5px;line-height:14px;letter-spacing:0.089px;left:58.80px;">I.WPA-04_118</div>
<div class="t" style="top:63.92px;font-size:12.5px;line-height:14px;letter-spacing:0.702px;left:58.80px;">(13/92/13)</div>
<div class="t" style="top:48.62px;font-size:12.5px;line-height:14px;letter-spacing:0.342px;left:177.20px;">Constraints</div>
<div class="t" style="top:48.62px;font-size:12.5px;line-height:14px;letter-spacing:0.153px;left:274.60px;">Base Extension</div>
<div class="t" style="top:63.92px;font-size:12.5px;line-height:14px;letter-spacing:0.357px;left:274.60px;">Distance</div>
<div class="t" style="top:48.62px;font-size:12.5px;line-height:14px;left:396.70px;">0</div>
<div style="position:absolute;left:0.00px;top:82.60px;width:468.50px;height:1.00px;background:#e8e8e8"></div>
<div class="t" style="top:90.37px;font-size:12.5px;line-height:14px;letter-spacing:0.547px;left:3.60px;">16</div>
<div class="t" style="top:90.37px;font-size:12.5px;line-height:14px;letter-spacing:0.089px;left:58.80px;">I.WPA-04_118</div>
<div class="t" style="top:105.67px;font-size:12.5px;line-height:14px;letter-spacing:0.702px;left:58.80px;">(13/92/13)</div>
<div class="t" style="top:90.37px;font-size:12.5px;line-height:14px;letter-spacing:0.342px;left:177.20px;">Constraints</div>
<div class="t" style="top:90.37px;font-size:12.5px;line-height:14px;letter-spacing:0.242px;left:274.60px;">Base is Attached</div>
<div class="t" style="top:90.37px;font-size:12.5px;line-height:14px;letter-spacing:0.758px;left:396.30px;">No</div>
<div style="position:absolute;left:0.00px;top:124.60px;width:468.50px;height:1.00px;background:#e8e8e8"></div>
<div class="t" style="top:132.12px;font-size:12.5px;line-height:14px;letter-spacing:0.547px;left:3.60px;">16</div>
<div class="t" style="top:132.12px;font-size:12.5px;line-height:14px;letter-spacing:0.089px;left:58.80px;">I.WPA-04_118</div>
<div class="t" style="top:147.42px;font-size:12.5px;line-height:14px;letter-spacing:0.702px;left:58.80px;">(13/92/13)</div>
<div class="t" style="top:132.12px;font-size:12.5px;line-height:14px;letter-spacing:0.342px;left:177.20px;">Constraints</div>
<div class="t" style="top:132.12px;font-size:12.5px;line-height:14px;left:275.00px;">Base Offset</div>
<div class="t" style="top:132.12px;font-size:12.5px;line-height:14px;left:396.70px;">0</div>
<div style="position:absolute;left:0.00px;top:166.60px;width:468.50px;height:1.00px;background:#e8e8e8"></div>
</div>
</div>
<div class="" style="position:absolute;left:0.00px;top:869.00px;width:1672.00px;height:53.00px;background:#f3f3f3">
<div style="position:absolute;left:0.00px;top:0.00px;width:343.50px;height:53.00px;background:#fff"></div>
<div style="position:absolute;left:2.00px;top:2.00px;width:1.00px;height:51.00px;background:#b9b9b9"></div>
<div style="position:absolute;left:233.00px;top:2.00px;width:1.00px;height:51.00px;background:#c8c8c8"></div>
<div style="position:absolute;left:343.00px;top:2.00px;width:1.00px;height:51.00px;background:#c8c8c8"></div>
<div style="position:absolute;left:2.00px;top:48.00px;width:231.50px;height:5.00px;background:#197b65"></div>
<div class="t" style="top:18.76px;font-size:18px;line-height:20px;color:#252423;letter-spacing:0.213px;left:32.60px;">Structural QuickView</div>
<div class="t" style="top:18.76px;font-size:18px;line-height:20px;color:#484644;letter-spacing:0.391px;left:264.60px;">About</div>
</div>
</div>
</body>
</html>
